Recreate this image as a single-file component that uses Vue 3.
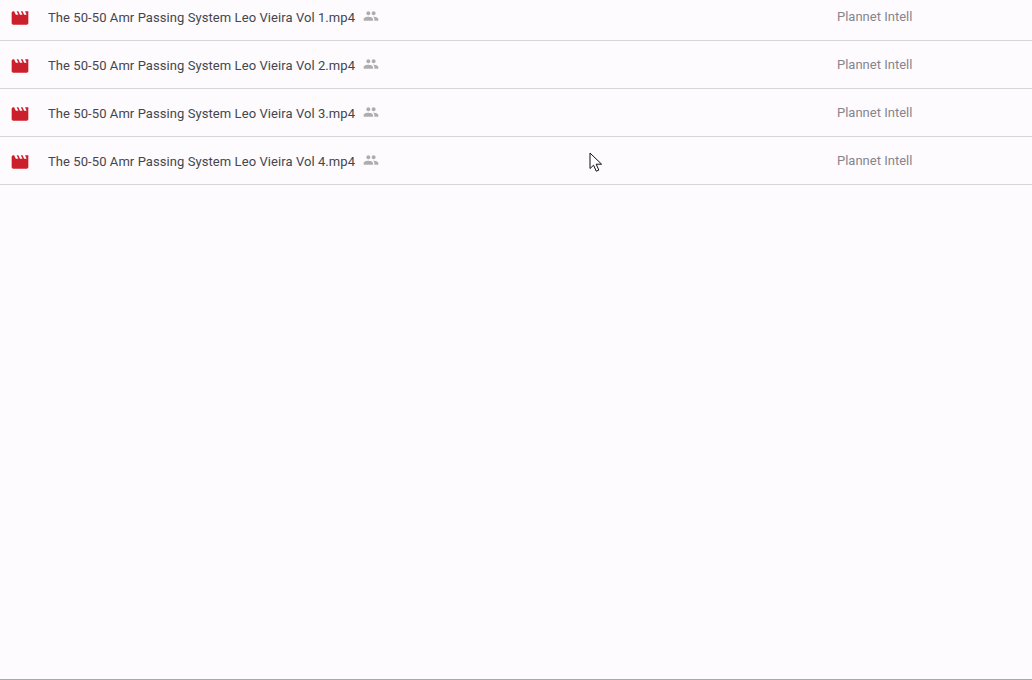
<script setup>
const rows = [1, 2, 3, 4].map((n) => ({
  id: n,
  name: `The 50-50 Amr Passing System Leo Vieira Vol ${n}.mp4`,
  owner: 'Plannet Intell',
}))
</script>

<template>
  <main class="page">
    <ul class="list">
      <li v-for="row in rows" :key="row.id" class="row">
        <svg class="file-icon" viewBox="0 0 24 24" aria-hidden="true">
          <path d="M18 4l2 4h-3l-2-4h-2l2 4h-3l-2-4H8l2 4H7L5 4H4c-1.1 0-1.99.9-1.99 2L2 18c0 1.1.9 2 2 2h16c1.1 0 2-.9 2-2V4h-4z" />
        </svg>
        <span class="name">{{ row.name }}</span>
        <svg class="shared-icon" viewBox="0 0 24 24" aria-hidden="true">
          <path d="M16 11c1.66 0 2.99-1.34 2.99-3S17.66 5 16 5c-1.66 0-3 1.34-3 3s1.34 3 3 3zm-8 0c1.66 0 2.99-1.34 2.99-3S9.66 5 8 5C6.34 5 5 6.34 5 8s1.34 3 3 3zm0 2c-2.33 0-7 1.17-7 3.5V19h14v-2.5c0-2.33-4.67-3.5-7-3.5zm8 0c-.29 0-.62.02-.97.05 1.16.84 1.97 1.97 1.97 3.45V19h6v-2.5c0-2.33-4.67-3.5-7-3.5z" />
        </svg>
        <span class="owner">{{ row.owner }}</span>
      </li>
    </ul>
    <svg class="cursor" width="15" height="21" viewBox="0 0 15 21" aria-hidden="true">
      <path d="M1 1v15.5l3.6-3.3 2.6 6 2.6-1.1-2.6-5.9H12.6z" fill="#fff" stroke="#111" stroke-width="1" stroke-linejoin="miter" />
    </svg>
  </main>
</template>

<style>
body {
  margin: 0;
  background: #fdfbfe;
}
</style>

<style scoped>
.page {
  position: relative;
  box-sizing: border-box;
  height: 680px;
  overflow: hidden;
  background: #fdfbfe;
  border-bottom: 1px solid #a8a8a8;
  font-family: Roboto, "Liberation Sans", sans-serif;
}

.list {
  list-style: none;
  margin: -7px 0 0;
  padding: 0;
}

.row {
  display: flex;
  align-items: center;
  box-sizing: border-box;
  height: 48px;
  border-bottom: 1px solid #d6d6d8;
}

.file-icon {
  flex: none;
  width: 20px;
  height: 20px;
  margin-left: 10px;
  margin-top: 2px;
  fill: #cc1f2c;
}

.name {
  margin-left: 18px;
  margin-top: 3px;
  font-size: 13px;
  letter-spacing: 0.075px;
  color: #44464c;
  white-space: nowrap;
  line-height: 20px;
}

.shared-icon {
  flex: none;
  width: 16px;
  height: 16px;
  margin-left: 8px;
  margin-top: -2px;
  fill: #aeaeb0;
}

.owner {
  position: absolute;
  left: 837px;
  margin-top: 1px;
  font-size: 13px;
  line-height: 20px;
  color: #85858d;
  white-space: nowrap;
}

.cursor {
  position: absolute;
  left: 589px;
  top: 152px;
}
</style>
